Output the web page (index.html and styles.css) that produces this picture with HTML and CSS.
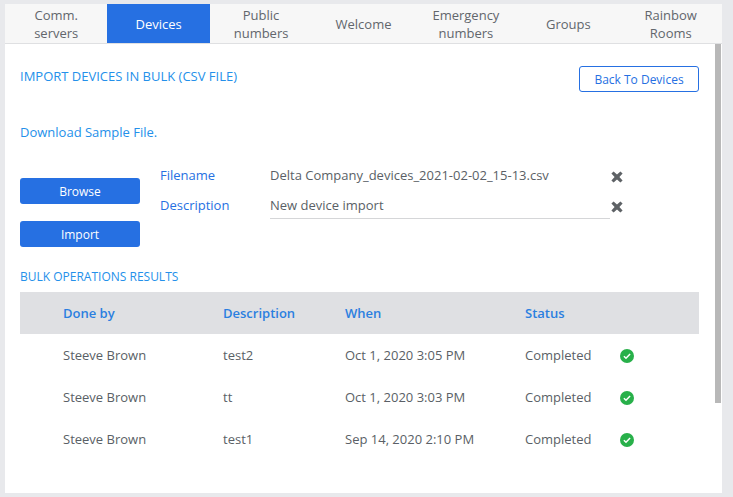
FILE: index.html
```html
<!DOCTYPE html>
<html lang="en">
<head>
<meta charset="utf-8">
<title>Import devices in bulk</title>
<link rel="stylesheet" href="styles.css">
</head>
<body>
<div class="panel">
  <nav class="tabs">
    <a class="tab">Comm.<br>servers</a>
    <a class="tab active">Devices</a>
    <a class="tab">Public<br>numbers</a>
    <a class="tab">Welcome</a>
    <a class="tab">Emergency<br>numbers</a>
    <a class="tab">Groups</a>
    <a class="tab">Rainbow<br>Rooms</a>
  </nav>
  <main class="content">
    <div class="scroll-thumb"></div>
    <div class="head-row">
      <h1 class="title">IMPORT DEVICES IN BULK (CSV FILE)</h1>
      <button class="btn-outline">Back To Devices</button>
    </div>
    <a class="sample">Download Sample File.</a>
    <div class="import-row">
      <div class="actions">
        <button class="btn">Browse</button>
        <button class="btn">Import</button>
      </div>
      <div class="fields">
        <div class="field">
          <span class="label">Filename</span>
          <span class="value">Delta Company_devices_2021-02-02_15-13.csv</span>
          <svg class="close" viewBox="0 0 12 12"><path d="M0.4 2.6 2.6 0.4 6 3.6 9.4 0.4 11.6 2.6 8.4 6 11.6 9.4 9.4 11.6 6 8.4 2.6 11.6 0.4 9.4 3.6 6Z"/></svg>
        </div>
        <div class="field">
          <span class="label">Description</span>
          <span class="value underlined">New device import</span>
          <svg class="close" viewBox="0 0 12 12"><path d="M0.4 2.6 2.6 0.4 6 3.6 9.4 0.4 11.6 2.6 8.4 6 11.6 9.4 9.4 11.6 6 8.4 2.6 11.6 0.4 9.4 3.6 6Z"/></svg>
        </div>
      </div>
    </div>
    <h2 class="subtitle">BULK OPERATIONS RESULTS</h2>
    <div class="table">
      <div class="row header"><span>Done by</span><span>Description</span><span>When</span><span>Status</span><span></span></div>
      <div class="row"><span>Steeve Brown</span><span>test2</span><span>Oct 1, 2020 3:05 PM</span><span>Completed</span><svg class="ok" viewBox="0 0 14 14"><circle cx="7" cy="7" r="7"/><path d="M3.9 7.2 6 9.2 10.1 5"/></svg></div>
      <div class="row"><span>Steeve Brown</span><span>tt</span><span>Oct 1, 2020 3:03 PM</span><span>Completed</span><svg class="ok" viewBox="0 0 14 14"><circle cx="7" cy="7" r="7"/><path d="M3.9 7.2 6 9.2 10.1 5"/></svg></div>
      <div class="row"><span>Steeve Brown</span><span>test1</span><span>Sep 14, 2020 2:10 PM</span><span>Completed</span><svg class="ok" viewBox="0 0 14 14"><circle cx="7" cy="7" r="7"/><path d="M3.9 7.2 6 9.2 10.1 5"/></svg></div>
    </div>
  </main>
</div>
</body>
</html>
```
FILE: styles.css
```css
* { box-sizing: border-box; }
html, body { height: 100%; }
body {
  margin: 0;
  padding: 4px 11px 4px 5px;
  background: #e8e9ec;
  font-family: "Open Sans", "Liberation Sans", sans-serif;
  font-size: 13px;
  color: #5a5f66;
  overflow: hidden;
}
.panel { background: #fff; height: 489px; display: flex; flex-direction: column; }
.tabs {
  display: grid;
  grid-template-columns: repeat(7, 1fr);
  height: 40px;
  flex: none;
  background: #f7f7f7;
  border-bottom: 1px solid #dfe0e2;
}
.tab {
  display: flex;
  align-items: center;
  justify-content: center;
  text-align: center;
  line-height: 18px;
  font-size: 13px;
  padding-top: 1px;
  color: #62666c;
}
.tab.active { background: #2670e2; color: #fff; }
.content { position: relative; flex: 1; padding: 22px 23px 0 15px; }
.scroll-thumb {
  position: absolute;
  top: 0;
  right: 1px;
  width: 6px;
  height: 359px;
  background: #b8b8b8;
}
.head-row { display: flex; justify-content: space-between; align-items: flex-start; height: 26px; }
.title { margin: 0; font-size: 13px; font-weight: 400; line-height: 20px; color: #2490ea; }
.btn-outline {
  width: 120px;
  height: 26px;
  padding: 0;
  background: #fff;
  border: 1px solid #2670e2;
  border-radius: 3px;
  font: 12px "Open Sans", "Liberation Sans", sans-serif;
  color: #2670e2;
}
.sample { display: block; margin-top: 30px; line-height: 20px; font-size: 13px; color: #2490ea; }
.import-row { display: flex; margin-top: 20px; }
.actions { display: flex; flex-direction: column; gap: 17px; width: 120px; padding-top: 16px; }
.btn {
  height: 26px;
  padding: 0;
  background: #2670e2;
  border: 0;
  border-radius: 3px;
  font: 12px "Open Sans", "Liberation Sans", sans-serif;
  color: #fff;
}
.fields { margin-left: 20px; display: flex; flex-direction: column; gap: 4px; }
.field { display: flex; align-items: center; height: 26px; }
.label { width: 110px; color: #2670e2; }
.value { width: 340px; height: 26px; line-height: 26px; align-self: flex-start; }
.value.underlined { height: 27px; border-bottom: 1px solid #d5d6d8; }
.close { width: 12px; height: 12px; margin: 4px 0 0 1px; fill: #5e6266; }
.subtitle { margin: 21px 0 0; font-size: 12px; font-weight: 400; line-height: 18px; color: #2490ea; }
.table { margin-top: 6px; }
.row {
  display: grid;
  grid-template-columns: 160px 122px 180px 95px 14px;
  align-items: center;
  height: 42px;
  padding-left: 43px;
}
.row.header { background: #dfe0e3; font-weight: 600; color: #2b7fe0; }
.ok { width: 14px; height: 14px; margin-top: 1px; }
.ok circle { fill: #28b04a; }
.ok path { fill: none; stroke: #fff; stroke-width: 1.5; }
```
